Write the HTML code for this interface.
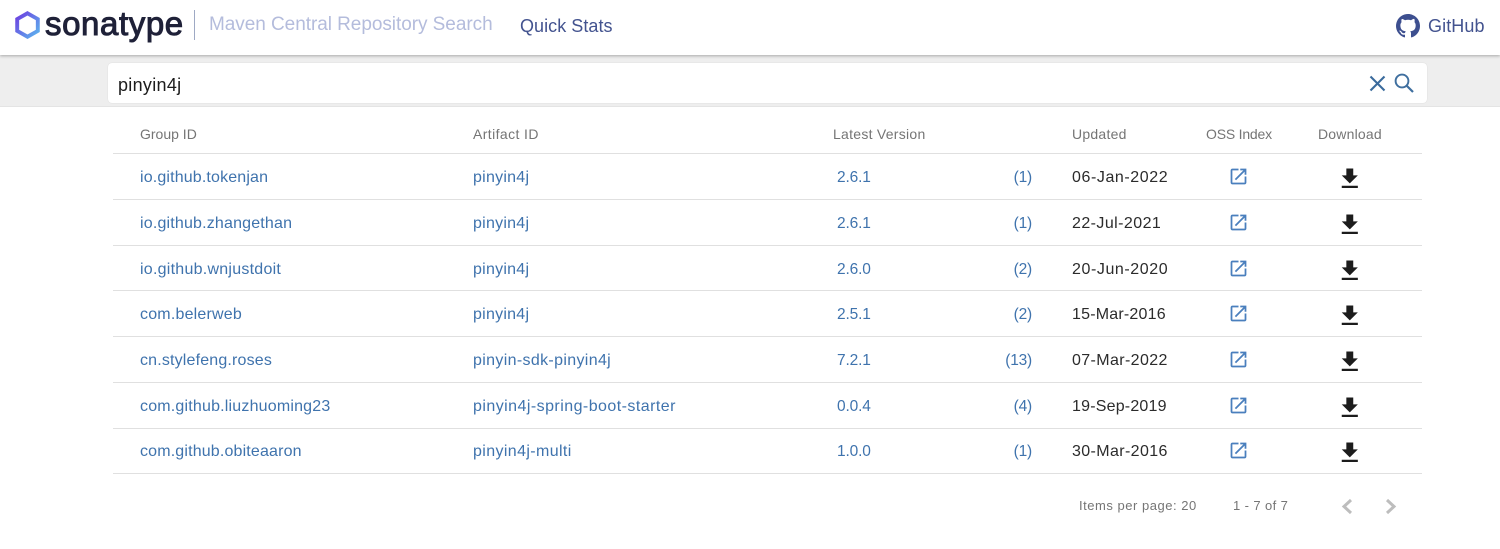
<!DOCTYPE html>
<html><head><meta charset="utf-8">
<style>
html,body{margin:0;padding:0;background:#fff}
body{width:1500px;height:549px;overflow:hidden;position:relative;font-family:"Liberation Sans",sans-serif}
.t{position:absolute;white-space:nowrap;line-height:20px;height:20px}
.h{font-size:14px;color:#757575;top:124px}
.l{font-size:16px;color:#3f73ad;letter-spacing:.2px}
.v{font-size:15.5px;color:#3f73ad;left:837px;letter-spacing:-.15px}
.c{font-size:15.5px;color:#3f73ad;left:982px;width:50px;text-align:right;letter-spacing:-.2px}
.d{font-size:16px;color:#2b2b2b;left:1072px}
.r{position:absolute;left:113px;width:1309px;height:1px;background:#e0e0e0}
svg{position:absolute}
</style></head><body>
<div style="position:absolute;left:0;top:0;width:1500px;height:55px;background:#fff;z-index:2;box-shadow:0 1px 3px rgba(0,0,0,.3)"></div>
<div style="position:absolute;left:0;top:55px;width:1500px;height:51px;background:#eeeeee;border-bottom:1px solid #e4e4e4"></div>
<div style="position:absolute;left:108px;top:63px;width:1319px;height:39.5px;background:#fff;border-radius:4px;box-shadow:0 0 1px rgba(0,0,0,.15);z-index:3"></div>

<div style="position:absolute;left:0;top:0;width:1500px;height:110px;z-index:4">
<svg style="left:15px;top:11px" width="26" height="28" viewBox="0 0 26 28"><defs><linearGradient id="g" x1="0" y1="0" x2="1" y2="1"><stop offset="0" stop-color="#6d3fe0"/><stop offset="1" stop-color="#5cb4ee"/></linearGradient></defs><path d="M12.5 2.3 22.8 8.1V19.9L12.5 25.7 2.2 19.9V8.1Z" fill="none" stroke="url(#g)" stroke-width="3.9"/></svg>
<div class="t" style="left:45px;top:9px;height:30px;line-height:30px;font-size:33px;color:#1f2138;letter-spacing:.6px;-webkit-text-stroke:1px #1f2138">sonatype</div>
<div style="position:absolute;left:194px;top:10px;width:1px;height:30px;background:#9ea9c4"></div>
<div class="t" style="left:209px;top:15px;font-size:19px;color:#b4bcdc;letter-spacing:-.05px">Maven Central Repository Search</div>
<div class="t" style="left:520px;top:16px;font-size:18px;color:#43538f;letter-spacing:.05px">Quick Stats</div>
<svg style="left:1396px;top:14px" width="24" height="24" viewBox="0 0 16 16"><path fill="#3d4f8f" d="M8 0C3.58 0 0 3.58 0 8c0 3.54 2.29 6.53 5.47 7.59.4.07.55-.17.55-.38 0-.19-.01-.82-.01-1.49-2.01.37-2.53-.49-2.69-.94-.09-.23-.48-.94-.82-1.13-.28-.15-.68-.52-.01-.53.63-.01 1.08.58 1.23.82.72 1.21 1.87.87 2.33.66.07-.52.28-.87.51-1.07-1.78-.2-3.64-.89-3.64-3.95 0-.87.31-1.59.82-2.15-.08-.2-.36-1.02.08-2.12 0 0 .67-.21 2.2.82.64-.18 1.32-.27 2-.27s1.36.09 2 .27c1.53-1.04 2.2-.82 2.2-.82.44 1.1.16 1.92.08 2.12.51.56.82 1.27.82 2.15 0 3.07-1.87 3.75-3.65 3.95.29.25.54.73.54 1.48 0 1.07-.01 1.93-.01 2.2 0 .21.15.46.55.38A8.01 8.01 0 0 0 16 8c0-4.42-3.58-8-8-8z"/></svg>
<div class="t" style="left:1428px;top:16px;font-size:18px;color:#43538f;letter-spacing:.1px">GitHub</div>
<div class="t" style="left:118px;top:75px;font-size:18px;color:#1c1c1c;letter-spacing:.3px">pinyin4j</div>
<svg style="left:1368px;top:74px" width="19" height="19" viewBox="0 0 19 19"><path d="M2.5 2.5 16.5 16.5M16.5 2.5 2.5 16.5" stroke="#3a6a9c" stroke-width="2.1" fill="none"/></svg>
<svg style="left:1393px;top:72px" width="22" height="22" viewBox="0 0 22 22"><circle cx="9" cy="9" r="6.4" stroke="#3f6f9f" stroke-width="1.9" fill="none"/><path d="M13.5 13.5 20 20" stroke="#3f6f9f" stroke-width="2.2" fill="none"/></svg>
</div>

<div class="t h" style="left:140px">Group ID</div>
<div class="t h" style="left:473px;letter-spacing:.4px">Artifact ID</div>
<div class="t h" style="left:833px;letter-spacing:.27px">Latest Version</div>
<div class="t h" style="left:1072px;letter-spacing:.25px">Updated</div>
<div class="t h" style="left:1206px;letter-spacing:-.2px">OSS Index</div>
<div class="t h" style="left:1318px;letter-spacing:.2px">Download</div>

<div class="r" style="top:153px"></div>
<div class="r" style="top:199px"></div>
<div class="r" style="top:245px"></div>
<div class="r" style="top:290px"></div>
<div class="r" style="top:336px"></div>
<div class="r" style="top:382px"></div>
<div class="r" style="top:428px"></div>
<div class="r" style="top:473px"></div>

<div class="t l" style="left:140px;top:168px;letter-spacing:.15px">io.github.tokenjan</div>
<div class="t l" style="left:473px;top:168px;letter-spacing:.25px">pinyin4j</div>
<div class="t v" style="top:168px">2.6.1</div>
<div class="t c" style="top:168px">(1)</div>
<div class="t d" style="top:168px;letter-spacing:.58px">06-Jan-2022</div>

<div class="t l" style="left:140px;top:214px;letter-spacing:.18px">io.github.zhangethan</div>
<div class="t l" style="left:473px;top:214px;letter-spacing:.25px">pinyin4j</div>
<div class="t v" style="top:214px">2.6.1</div>
<div class="t c" style="top:214px">(1)</div>
<div class="t d" style="top:214px;letter-spacing:.43px">22-Jul-2021</div>

<div class="t l" style="left:140px;top:260px;letter-spacing:.25px">io.github.wnjustdoit</div>
<div class="t l" style="left:473px;top:260px;letter-spacing:.25px">pinyin4j</div>
<div class="t v" style="top:260px">2.6.0</div>
<div class="t c" style="top:260px">(2)</div>
<div class="t d" style="top:260px;letter-spacing:.58px">20-Jun-2020</div>

<div class="t l" style="left:140px;top:305px">com.belerweb</div>
<div class="t l" style="left:473px;top:305px;letter-spacing:.25px">pinyin4j</div>
<div class="t v" style="top:305px">2.5.1</div>
<div class="t c" style="top:305px">(2)</div>
<div class="t d" style="top:305px;letter-spacing:.2px">15-Mar-2016</div>

<div class="t l" style="left:140px;top:351px;letter-spacing:.17px">cn.stylefeng.roses</div>
<div class="t l" style="left:473px;top:351px;letter-spacing:.34px">pinyin-sdk-pinyin4j</div>
<div class="t v" style="top:351px">7.2.1</div>
<div class="t c" style="top:351px">(13)</div>
<div class="t d" style="top:351px;letter-spacing:.38px">07-Mar-2022</div>

<div class="t l" style="left:140px;top:397px;letter-spacing:.19px">com.github.liuzhuoming23</div>
<div class="t l" style="left:473px;top:397px;letter-spacing:.45px">pinyin4j-spring-boot-starter</div>
<div class="t v" style="top:397px">0.0.4</div>
<div class="t c" style="top:397px">(4)</div>
<div class="t d" style="top:397px;letter-spacing:.2px">19-Sep-2019</div>

<div class="t l" style="left:140px;top:442px;letter-spacing:.16px">com.github.obiteaaron</div>
<div class="t l" style="left:473px;top:442px;letter-spacing:.38px">pinyin4j-multi</div>
<div class="t v" style="top:442px">1.0.0</div>
<div class="t c" style="top:442px">(1)</div>
<div class="t d" style="top:442px;letter-spacing:.38px">30-Mar-2016</div>

<svg width="0" height="0"><defs>
<path id="o" fill="#4a7fbd" d="M19 19H5V5h7V3H5c-1.11 0-2 .9-2 2v14c0 1.1.89 2 2 2h14c1.1 0 2-.9 2-2v-7h-2v7zM14 3v2h3.59l-9.83 9.83 1.41 1.41L19 6.41V10h2V3h-7z"/>
<path id="w" fill="#1c1c1c" d="M19 9h-4V3H9v6H5l7 7 7-7zM5 18v2h14v-2H5z"/>
</defs></svg>

<svg style="left:1227.5px;top:165.5px" width="21" height="21" viewBox="0 0 24 24"><use href="#o"/></svg>
<svg style="left:1227.5px;top:211.5px" width="21" height="21" viewBox="0 0 24 24"><use href="#o"/></svg>
<svg style="left:1227.5px;top:257.5px" width="21" height="21" viewBox="0 0 24 24"><use href="#o"/></svg>
<svg style="left:1227.5px;top:302.5px" width="21" height="21" viewBox="0 0 24 24"><use href="#o"/></svg>
<svg style="left:1227.5px;top:348.5px" width="21" height="21" viewBox="0 0 24 24"><use href="#o"/></svg>
<svg style="left:1227.5px;top:394.5px" width="21" height="21" viewBox="0 0 24 24"><use href="#o"/></svg>
<svg style="left:1227.5px;top:439.5px" width="21" height="21" viewBox="0 0 24 24"><use href="#o"/></svg>

<svg style="left:1336.2px;top:164.5px" width="27.6" height="27.6" viewBox="0 0 24 24"><use href="#w"/></svg>
<svg style="left:1336.2px;top:210.5px" width="27.6" height="27.6" viewBox="0 0 24 24"><use href="#w"/></svg>
<svg style="left:1336.2px;top:256.5px" width="27.6" height="27.6" viewBox="0 0 24 24"><use href="#w"/></svg>
<svg style="left:1336.2px;top:301.5px" width="27.6" height="27.6" viewBox="0 0 24 24"><use href="#w"/></svg>
<svg style="left:1336.2px;top:347.5px" width="27.6" height="27.6" viewBox="0 0 24 24"><use href="#w"/></svg>
<svg style="left:1336.2px;top:393.5px" width="27.6" height="27.6" viewBox="0 0 24 24"><use href="#w"/></svg>
<svg style="left:1336.2px;top:438.5px" width="27.6" height="27.6" viewBox="0 0 24 24"><use href="#w"/></svg>

<div class="t" style="left:1079px;top:496px;font-size:13px;color:#757575;letter-spacing:.52px">Items per page: 20</div>
<div class="t" style="left:1233px;top:496px;font-size:13px;color:#757575;letter-spacing:.4px">1 - 7 of 7</div>
<svg style="left:1340px;top:498px" width="14" height="17" viewBox="0 0 14 17"><path d="M11 2 4 8.5 11 15" fill="none" stroke="#bdbdbd" stroke-width="3"/></svg>
<svg style="left:1384px;top:498px" width="14" height="17" viewBox="0 0 14 17"><path d="M3 2 10 8.5 3 15" fill="none" stroke="#bdbdbd" stroke-width="3"/></svg>
</body></html>
